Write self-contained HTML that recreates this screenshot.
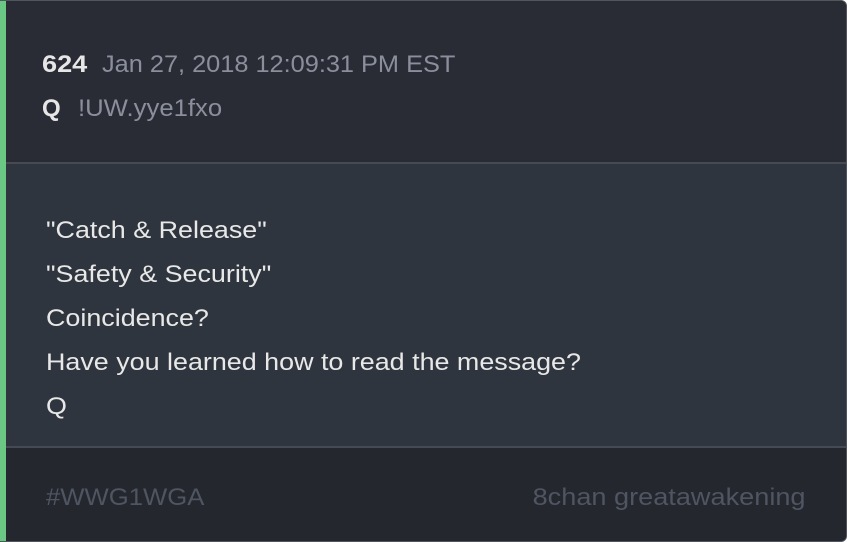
<!DOCTYPE html>
<html><head><style>
html,body{margin:0;padding:0;background:#fff;width:848px;height:542px;overflow:hidden}
.card{position:absolute;left:0;top:0;width:846px;height:540px;border:1px solid #50555e;border-left:none;border-radius:0 6px 6px 0;overflow:hidden;background:#2a2d35;font-family:"Liberation Sans",sans-serif}
.green{position:absolute;left:0;top:0;width:6px;height:100%;background:#6ac784}
.hdr{position:absolute;left:6px;top:0;right:0;height:161px;background:#292c34;border-bottom:2px solid #454a53}
.body{position:absolute;left:6px;top:163px;right:0;height:282px;background:#2f353e;border-bottom:2px solid #454a53}
.ftr{position:absolute;left:6px;top:447px;right:0;bottom:0;background:#24272e}
.t{position:absolute;white-space:nowrap;transform-origin:left center}
</style></head><body>
<div class="card">
<div class="green"></div>
<div class="hdr">
 <div class="t" style="left:36px;top:50px;font-size:24px;font-weight:bold;color:#e6e6e6;transform:scaleX(1.13)">624</div>
 <div class="t" style="left:96px;top:50px;font-size:24px;color:#8b8f9c;transform:scaleX(1.055)">Jan 27, 2018 12:09:31 PM EST</div>
 <div class="t" style="left:36px;top:94px;font-size:24px;font-weight:bold;color:#e6e6e6">Q</div>
 <div class="t" style="left:72px;top:94px;font-size:24px;color:#8b8f9c;transform:scaleX(1.07)">!UW.yye1fxo</div>
</div>
<div class="body">
 <div class="t" style="left:40px;top:45px;font-size:24px;line-height:44px;color:#e8e8e8;transform:scaleX(1.12)">"Catch &amp; Release"<br>"Safety &amp; Security"<br>Coincidence?<br>Have you learned how to read the message?<br>Q</div>
</div>
<div class="ftr">
 <div class="t" style="left:40px;top:36px;font-size:24px;color:#4f5561;transform:scaleX(1.07)">#WWG1WGA</div>
 <div class="t" style="right:40px;top:36px;font-size:24px;color:#4f5561;transform-origin:right center;transform:scaleX(1.13)">8chan greatawakening</div>
</div>
</div>
</body></html>
